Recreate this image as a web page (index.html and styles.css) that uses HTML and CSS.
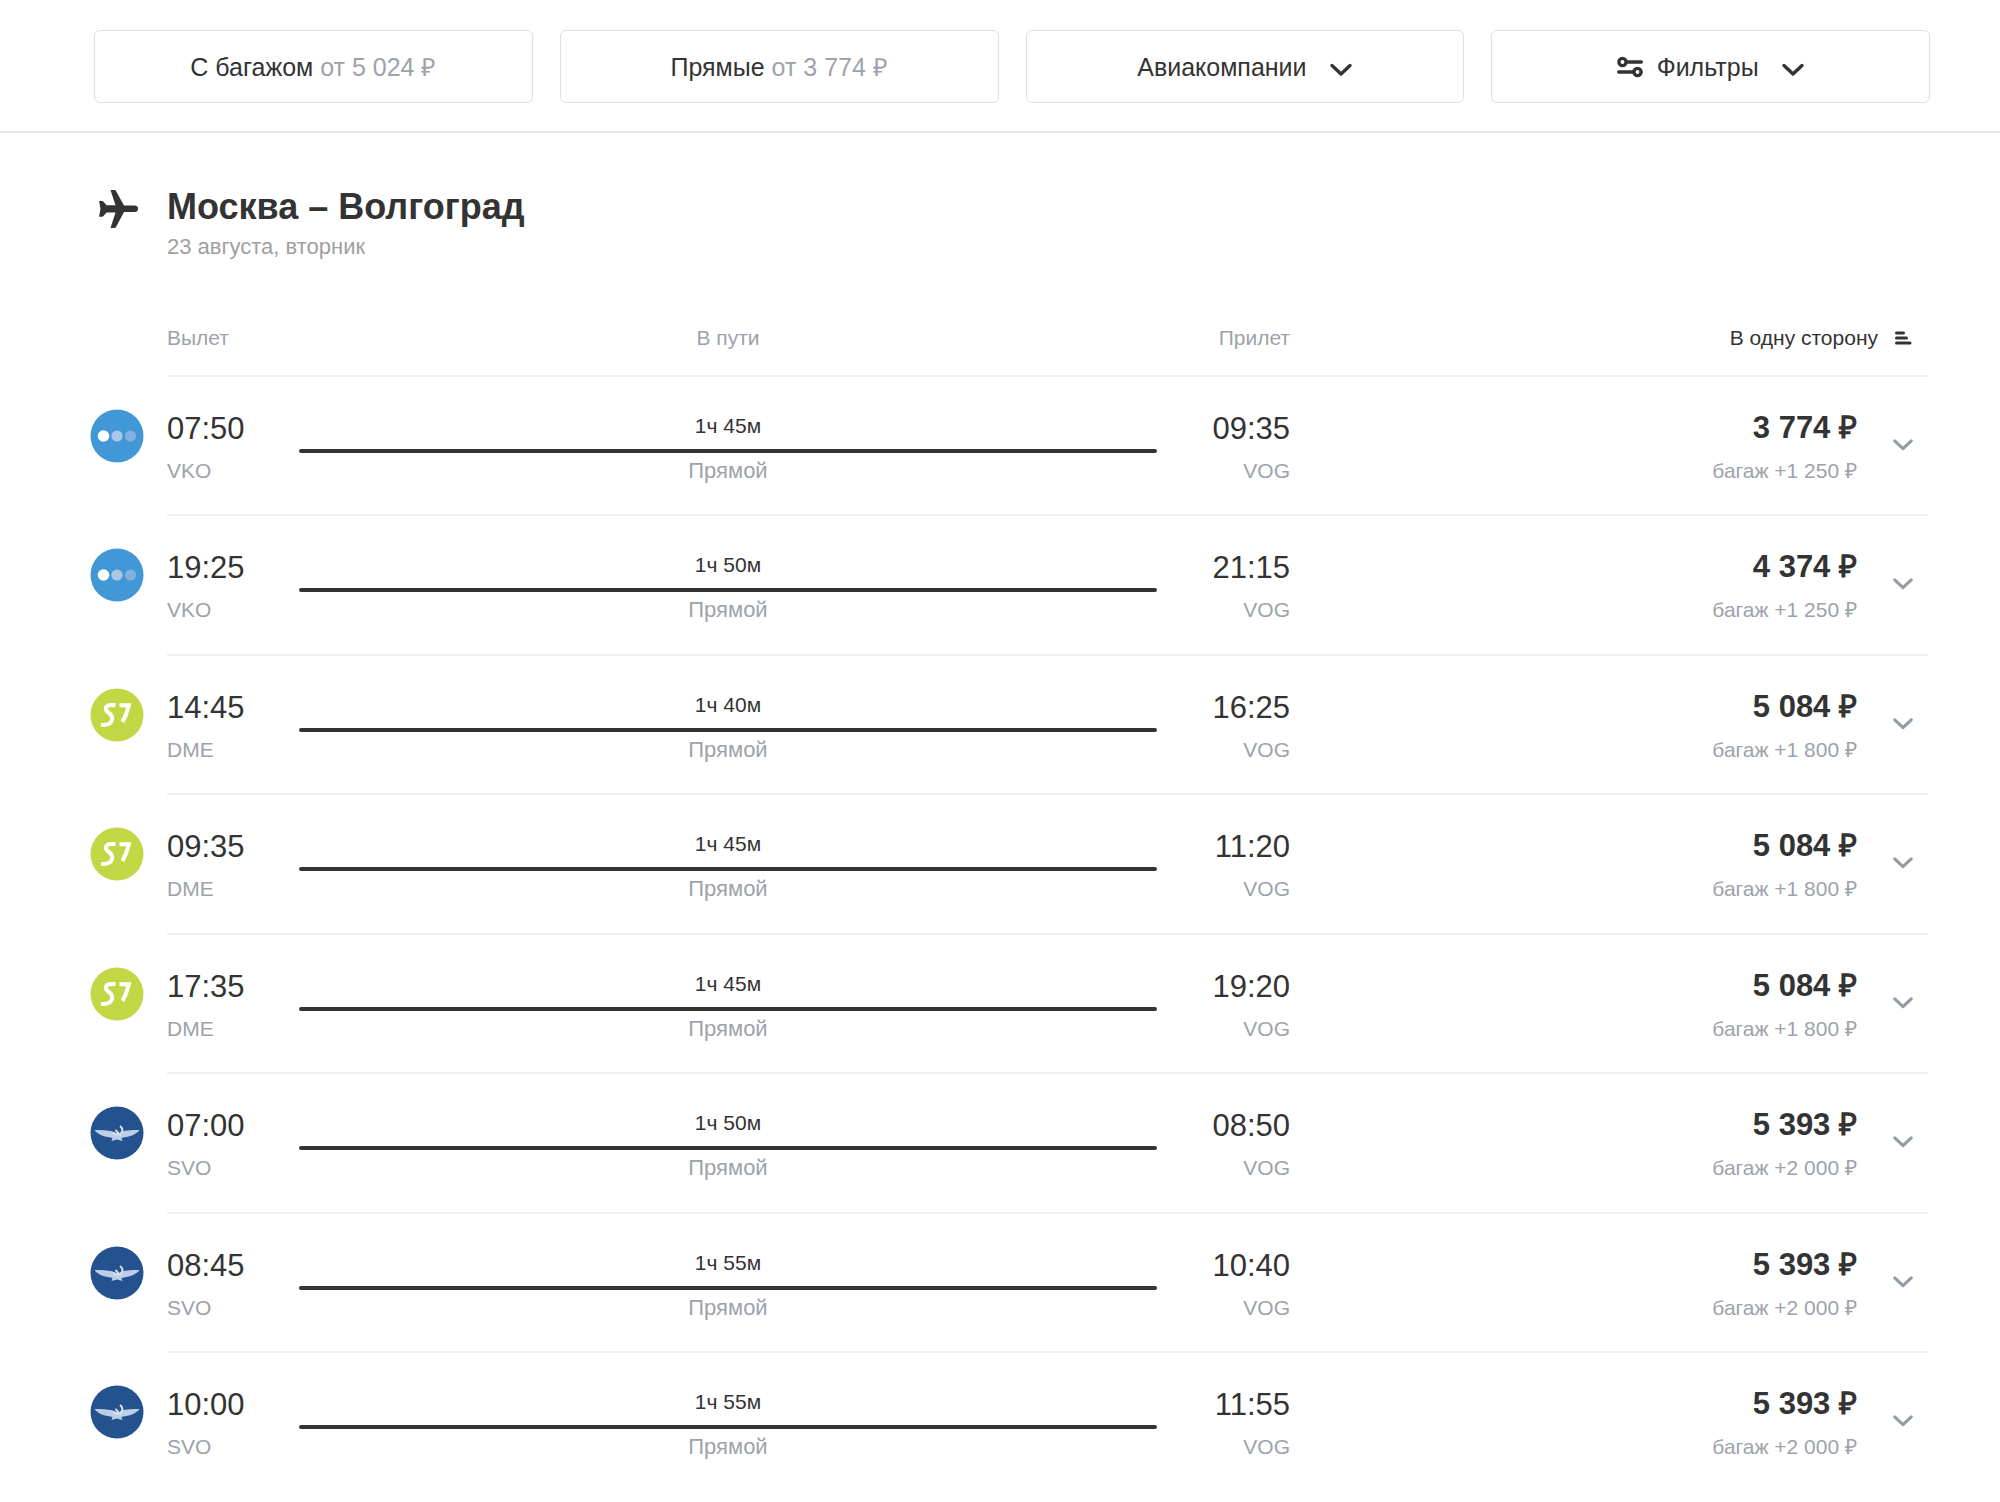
FILE: index.html
```html
<!DOCTYPE html>
<html lang="ru">
<head>
<meta charset="utf-8">
<title>Москва – Волгоград</title>
<link rel="stylesheet" href="styles.css">
</head>
<body>
<svg class="sprite" aria-hidden="true">
  <symbol id="chevron" viewBox="0 0 24 14"><path d="M3 2.5l9 8.500l9-8.500" fill="none" stroke="currentColor" stroke-width="3.400" stroke-linecap="round" stroke-linejoin="round"/></symbol>
  <symbol id="pobeda" viewBox="0 0 54 54"><circle cx="27" cy="27" r="26.500" fill="#4297d6"/><circle cx="13.500" cy="27" r="5.800" fill="#fff"/><circle cx="27" cy="27" r="5.600" fill="#aac7e6"/><circle cx="40.500" cy="27" r="5.600" fill="#83b0dc"/></symbol>
  <symbol id="s7" viewBox="0 0 54 54"><circle cx="27" cy="27" r="26.500" fill="#c3d745"/><path d="M25.500 17.300c-4-.8-9.300-.6-9.700 3.200-.4 4.500 7.200 4.500 6.400 10.500-.6 4.800-5.700 6.600-11.200 5.600" fill="none" stroke="#fff" stroke-width="4"/><path d="M29.500 17.300h9.400c-1.200 5-3.200 11-6.400 16.700" fill="none" stroke="#fff" stroke-width="4"/></symbol>
  <symbol id="aeroflot" viewBox="0 0 54 54"><circle cx="27" cy="27" r="26.500" fill="#23528f"/><path d="M4.500 24c7 .1 13 .3 18 1.300l1.500 2 6-.3 1.500-1.700c5-1 11-1.200 18-1.300-3 4-8 6.500-16 7.500l-2 .5 1 3-5.500-1.500-5.500 1.500 1-3-2-.5c-8-1-13-3.500-16-7.500z" fill="#bccfe6"/><path d="M30 20c3.500 2.500 3.500 8.500-2.500 8.500-2 0-3.500-1-4-2.500M25.500 24l5.500 6" fill="none" stroke="#d3dfee" stroke-width="2"/></symbol>
</svg>

<header class="filters">
  <button class="filter" type="button"><span>С багажом <span class="muted">от 5 024 ₽</span></span></button>
  <button class="filter" type="button"><span>Прямые <span class="muted">от 3 774 ₽</span></span></button>
  <button class="filter" type="button">Авиакомпании <svg class="filter-chevron"><use href="#chevron"/></svg></button>
  <button class="filter" type="button"><svg class="sliders" viewBox="0 0 26 22"><g fill="none" stroke="currentColor" stroke-width="3.400" stroke-linecap="round"><circle cx="5.500" cy="6" r="3.600"/><path d="M10 6h14.300M1.700 16H16"/><circle cx="20.500" cy="16" r="3.600"/></g></svg> Фильтры <svg class="filter-chevron"><use href="#chevron"/></svg></button>
</header>

<main class="results">
  <div class="route">
    <svg class="plane" viewBox="0 0 40 40"><path d="M12.500 1h4q1 0 1.500 1l8 14.500H36.500q3.500 0 3.500 3.300t-3.500 3.300H26L18 38q-.5 1-1.500 1h-4L17.500 23.500H8.500l-3 3.500q-.5.700-1.500.700H1l1.500-8L1 12h3q1 0 1.500.7l3 3.500h9z" fill="currentColor"/></svg>
    <div>
      <h1 class="route-title">Москва – Волгоград</h1>
      <p class="route-date">23 августа, вторник</p>
    </div>
  </div>

  <table class="flights">
    <colgroup><col class="col-logo"><col class="col-depart"><col><col class="col-arrive"><col class="col-price"><col class="col-more"></colgroup>
    <thead>
      <tr>
        <td></td>
        <th scope="col" class="start">Вылет</th>
        <th scope="col">В пути</th>
        <th scope="col" class="end">Прилет</th>
        <th scope="col" colspan="2" class="end sort-cell"><button class="sort" type="button">В одну сторону <svg class="sort-icon" viewBox="0 0 18 14"><path d="M2.500 2h7M2.500 7h10M2.500 12h13.500" stroke="currentColor" stroke-width="3" stroke-linecap="round"/></svg></button></th>
      </tr>
    </thead>
    <tbody id="rows"></tbody>
  </table>
</main>
<script src="flights.js"></script>
</body>
</html>
```
FILE: styles.css
```css
* { box-sizing: border-box; }

body {
  margin: 0;
  background: #fff;
  color: #333;
  font-family: "Liberation Sans", Arial, sans-serif;
  font-size: 21px;
  line-height: 28px;
}

button {
  font: inherit;
  color: inherit;
  background: none;
  border: 0;
  padding: 0;
  cursor: pointer;
}

svg { display: block; }

.sprite { position: absolute; width: 0; height: 0; }

.muted { color: #9da2ac; }

/* Filter bar */
.filters {
  display: grid;
  grid-template-columns: repeat(4, 1fr);
  gap: 27px;
  padding: 30px 70px 28px 94px;
  border-bottom: 2px solid #e6e6e6;
}

.filter {
  display: flex;
  align-items: center;
  justify-content: center;
  height: 73px;
  border: 1px solid #dfdfdf;
  border-radius: 6px;
  font-size: 25px;
}

.filter-chevron { width: 24px; height: 14px; margin: 6px 0 0 22px; }

.sliders { width: 26px; height: 22px; margin-right: 14px; }

/* Route heading */
.results { padding: 48px 72px 8px 90px; }

.route { display: flex; }

.plane { width: 40px; height: 40px; margin: 8px 29px 0 8px; }

.route-title { margin: 0; font-size: 36px; line-height: 52px; }

.route-date { margin: 0; font-size: 22px; color: #a0a0a0; }

/* Flights */
.flights {
  width: 100%;
  margin-top: 46px;
  border-collapse: separate;
  border-spacing: 0;
  table-layout: fixed;
}

.col-logo { width: 77px; }
.col-depart { width: 132px; }
.col-arrive { width: 133px; }
.col-price { width: 567px; }
.col-more { width: 71px; }

@media (max-width: 1700px) {
  .col-price { width: 30%; }
}

.flights th,
.flights td {
  padding: 0;
  vertical-align: top;
  text-align: center;
  border-bottom: 2px solid #f0f0f0;
}

.flights td:first-child,
.flights tbody tr:last-child td { border-bottom: 0; }

.flights th { height: 70px; padding-top: 17px; font-weight: 400; color: #9da2ac; }

.flights .start { text-align: left; }
.flights .end { text-align: right; }

.flights .sort-cell { padding-right: 16px; }
.sort { display: inline-flex; align-items: center; gap: 16px; color: #333; }
.sort-icon { width: 18px; height: 14px; }

.flights tbody tr { height: 139px; }
.flights tbody tr:nth-child(even) { height: 140px; }
.flights tbody td { padding-top: 32px; }

.logo { width: 54px; height: 54px; }

.time { font-size: 31px; line-height: 40px; margin-bottom: 8px; }
.price { font-size: 31px; line-height: 38px; font-weight: 700; margin-bottom: 10px; }
.note { color: #9da2ac; }
.stops { font-size: 22px; color: #9da2ac; }
.duration { padding-top: 3px; }
.bar { height: 4px; margin: 9px 0 4px; border-radius: 2px; background: #333; }

.more { padding: 29px 14px 0; color: #959ba5; }
.more svg { width: 22px; height: 14px; }
```
FILE: flights.js
```js
const flights = [
  ["pobeda", "07:50", "VKO", "1ч 45м", "09:35", "3 774", "1 250"],
  ["pobeda", "19:25", "VKO", "1ч 50м", "21:15", "4 374", "1 250"],
  ["s7", "14:45", "DME", "1ч 40м", "16:25", "5 084", "1 800"],
  ["s7", "09:35", "DME", "1ч 45м", "11:20", "5 084", "1 800"],
  ["s7", "17:35", "DME", "1ч 45м", "19:20", "5 084", "1 800"],
  ["aeroflot", "07:00", "SVO", "1ч 50м", "08:50", "5 393", "2 000"],
  ["aeroflot", "08:45", "SVO", "1ч 55м", "10:40", "5 393", "2 000"],
  ["aeroflot", "10:00", "SVO", "1ч 55м", "11:55", "5 393", "2 000"],
];

document.getElementById("rows").innerHTML = flights.map(
  ([logo, depart, from, duration, arrive, price, bag]) => `
  <tr>
    <td><svg class="logo"><use href="#${logo}"/></svg></td>
    <td class="start"><div class="time">${depart}</div><div class="note">${from}</div></td>
    <td><div class="duration">${duration}</div><div class="bar"></div><div class="stops">Прямой</div></td>
    <td class="end"><div class="time">${arrive}</div><div class="note">VOG</div></td>
    <td class="end"><div class="price">${price} ₽</div><div class="note">багаж +${bag} ₽</div></td>
    <td class="end"><button class="more" type="button" aria-label="Подробнее"><svg><use href="#chevron"/></svg></button></td>
  </tr>`).join("");
```
